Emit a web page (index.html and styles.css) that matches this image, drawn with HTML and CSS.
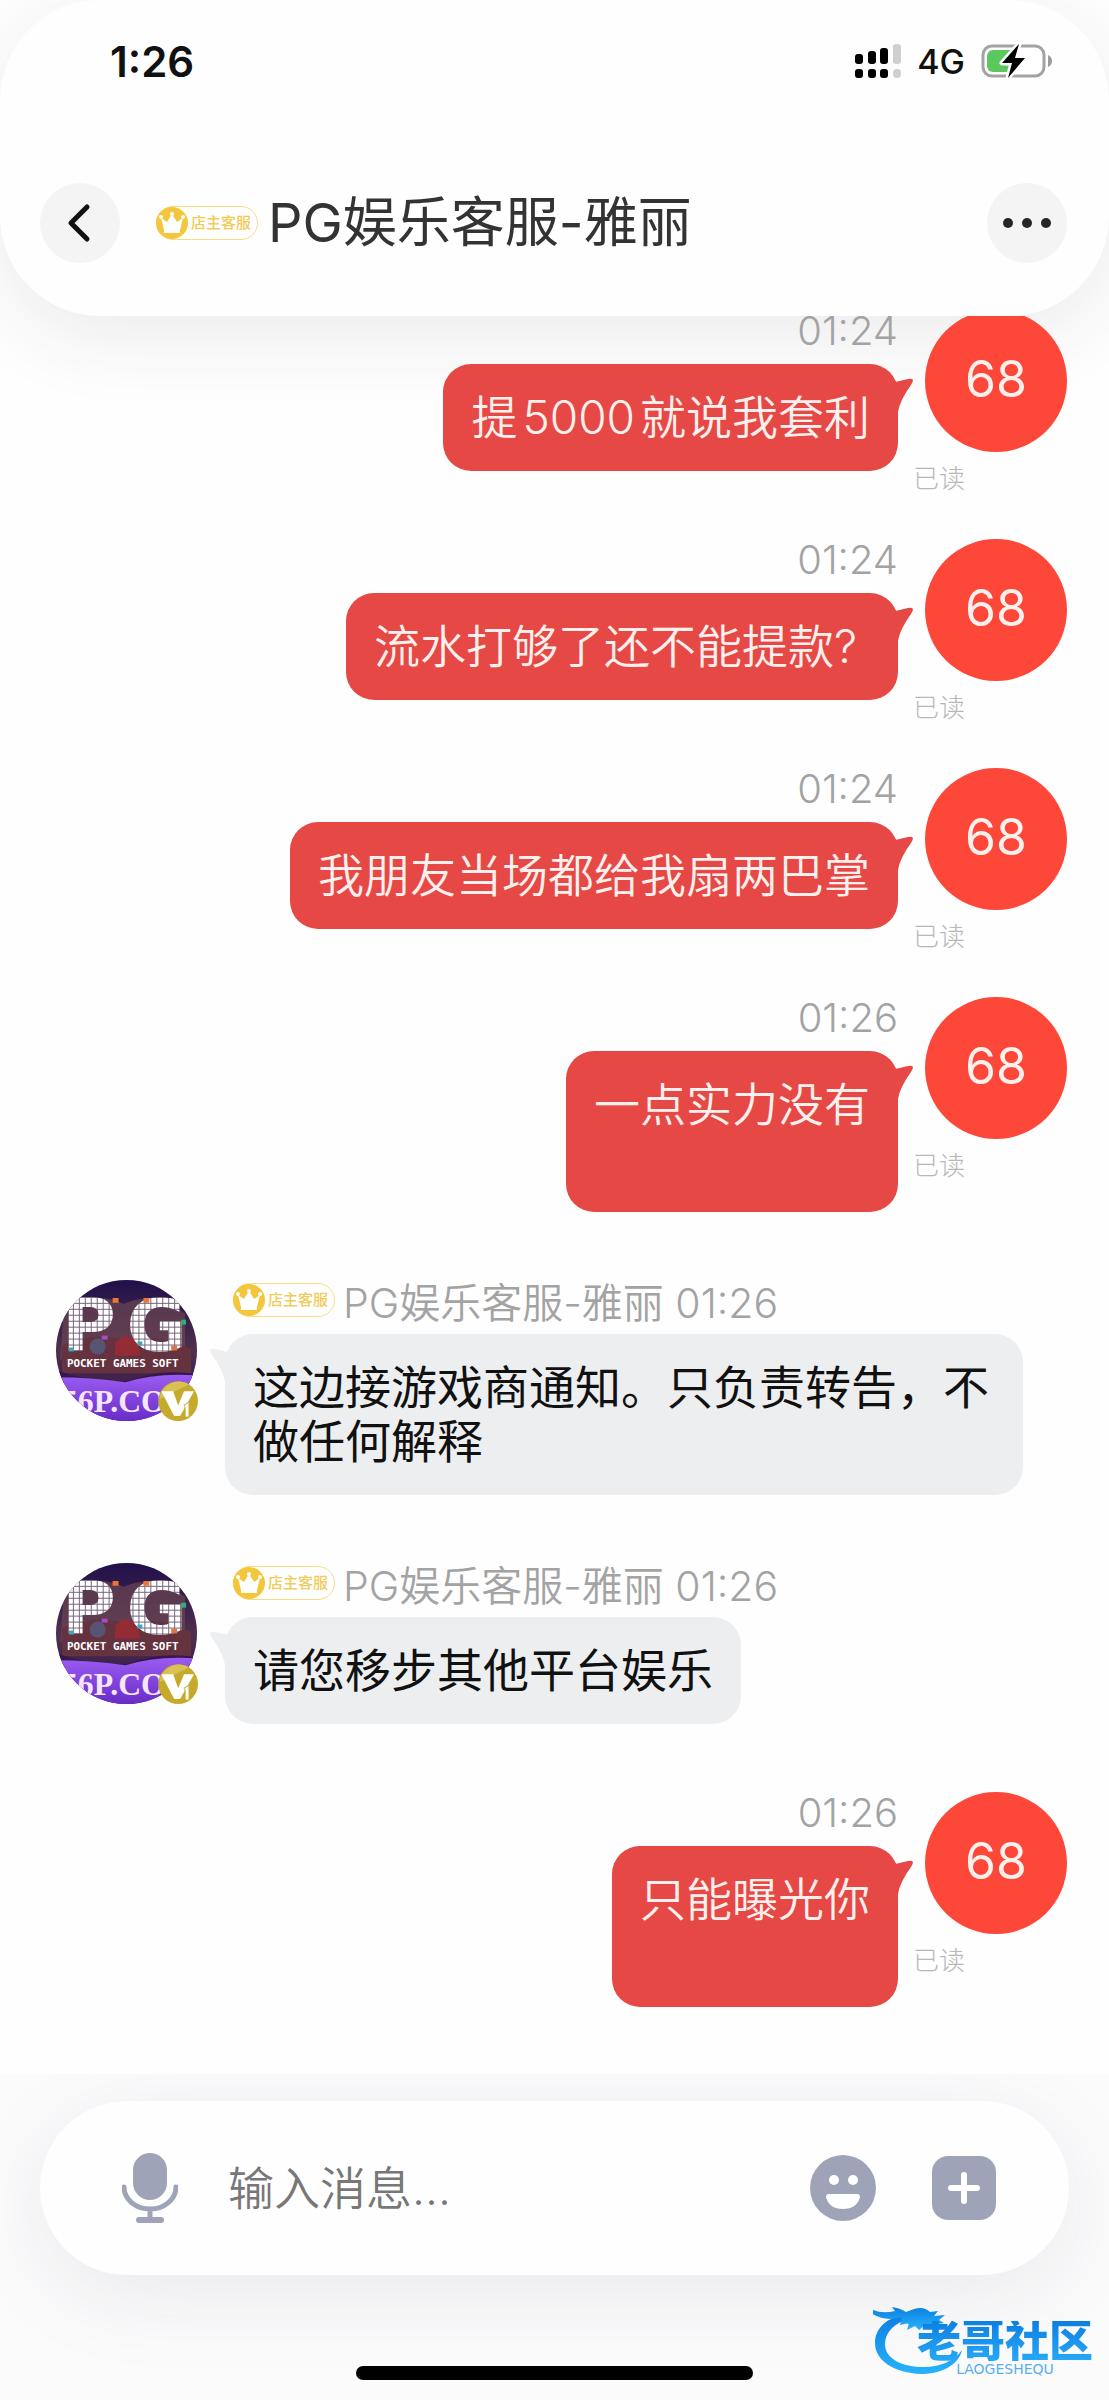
FILE: index.html
```html
<!DOCTYPE html>
<html lang="zh-CN">
<head>
    <meta charset="UTF-8" />
    <meta name="viewport" content="width=device-width, initial-scale=1.0" />
    <title>PG娱乐客服-雅丽</title>
    <link rel="stylesheet" href="styles.css">
</head>
<body>
    <!-- shared symbols -->
    <svg class="defs" width="0" height="0" aria-hidden="true">
        <defs>
            <linearGradient id="sky" x1="0" y1="0" x2="0" y2="1">
                <stop offset="0" stop-color="#20104a" />
                <stop offset="0.5" stop-color="#4f2f4c" />
                <stop offset="1" stop-color="#2a1050" />
            </linearGradient>
            <linearGradient id="band" x1="0" y1="0" x2="0" y2="1">
                <stop offset="0" stop-color="#9a5cf0" />
                <stop offset="1" stop-color="#6a2cc8" />
            </linearGradient>
            <pattern id="pixels" width="6" height="6" patternUnits="userSpaceOnUse">
                <rect width="6" height="6" fill="#75657c" />
                <rect width="5" height="5" fill="#fff" />
            </pattern>
            <clipPath id="round"><circle cx="71" cy="71" r="71" /></clipPath>
        </defs>
        <symbol id="crown" viewBox="0 0 34 34">
            <circle cx="17" cy="17" r="16" fill="#f3c63c" />
            <path d="M6 12l6 4 5-8 5 8 6-4-3 12H9z" fill="#fff" />
            <circle cx="6" cy="11" r="2" fill="#fff" />
            <circle cx="17" cy="8" r="2" fill="#fff" />
            <circle cx="28" cy="11" r="2" fill="#fff" />
            <path d="M9 24h16v3H9z" fill="#fff" />
        </symbol>
        <symbol id="scene" viewBox="0 0 144 144">
            <g clip-path="url(#round)">
                <rect width="142" height="142" fill="url(#sky)" />
                <path d="M8 30q30-20 60-6 30-14 62 10v46H4z" fill="#6b4652" opacity="0.7" />
                <path d="M6 66q34-16 66-4 32-10 64 8v24H6z" fill="#64333f" />
                <circle cx="42" cy="67" r="8" fill="#575476" />
                <path d="M60 62l10-6 12 6 3 14H59z" fill="#942c36" />
                <path d="M0 91q40 14 76 10 28-12 66-6v10H0z" fill="#35164f" />
                <path d="M0 98q34 0 70 5 30-10 72-7v46H0z" fill="url(#band)" />
            </g>
        </symbol>
        <symbol id="level" viewBox="0 0 144 144">
            <path d="M57 18h6v5h-6zM88 18h6v5h-6z" fill="#e87634" />
            <path d="M126 40h5v5h-5z" fill="#2fae72" />
            <path d="M46 56h6v4h-6z" fill="#a44cc4" />
            <path d="M13 68h5v4h-5zM82 62h5v4h-5z" fill="#3da7bd" />
            <path d="M116 66h6v5h-6z" fill="#df7546" />
            <circle cx="123" cy="122" r="20" fill="#c5aa2b" />
            <path d="M104 120a20 20 0 0 1 30-15z" fill="#d9c253" />
            <path d="M106 112h12l5 14 6-14h10l-14 25h-6z" fill="#fff" />
            <path d="M129 126l5-3v15h-4v-10z" fill="#fff" stroke="#c5aa2b" stroke-width="1" />
        </symbol>
    </svg>

    <header class="header">
        <div class="status-bar">
            <span class="clock">1:26</span>
            <div class="status-icons">
                <svg width="46" height="34" viewBox="0 0 46 34" aria-label="信号">
                    <g fill="#000">
                        <rect x="0" y="10" width="8" height="10" rx="3" />
                        <rect x="13" y="7" width="8" height="13" rx="3" />
                        <rect x="25" y="4" width="8" height="16" rx="3" />
                        <rect x="0" y="25" width="8" height="9" rx="3" />
                        <rect x="13" y="25" width="8" height="9" rx="3" />
                        <rect x="25" y="25" width="8" height="9" rx="3" />
                    </g>
                    <g fill="#cfcfcf">
                        <rect x="38" y="0" width="8" height="20" rx="3" />
                        <rect x="38" y="25" width="8" height="9" rx="4" />
                    </g>
                </svg>
                <span class="network">4G</span>
                <svg width="72" height="36" viewBox="0 0 72 36" aria-label="电池">
                    <rect x="2" y="3" width="61" height="30" rx="9" fill="#fff" stroke="#a3a3a3" stroke-width="3" />
                    <path d="M12 7h20v22H12a6 6 0 0 1-6-6V13a6 6 0 0 1 6-6z" fill="#5ac85c" />
                    <path d="M67 12q4 2 4 6t-4 6z" fill="#9b9b9b" />
                    <path d="M38 1L21 20h10l-4 15 17-20H34z" fill="#000" stroke="#fff" stroke-width="5" stroke-linejoin="round" paint-order="stroke" />
                </svg>
            </div>
        </div>
        <div class="nav">
            <button class="round-btn" type="button" aria-label="返回">
                <svg width="40" height="44" viewBox="0 0 40 44"><path d="M27 6L11 22l16 16" fill="none" stroke="#111" stroke-width="5" stroke-linecap="round" stroke-linejoin="round" /></svg>
            </button>
            <span class="badge"><svg class="crown"><use href="#crown" /></svg>店主客服</span>
            <h1>PG娱乐客服-雅丽</h1>
            <button class="round-btn more" type="button" aria-label="更多">
                <svg width="52" height="12" viewBox="0 0 52 12" fill="#262626"><circle cx="7" cy="6" r="5" /><circle cx="26" cy="6" r="5" /><circle cx="45" cy="6" r="5" /></svg>
            </button>
        </div>
    </header>

    <main class="chat">
        <div class="messages">
            <div class="message mine">
                <div class="content">
                    <div class="meta">01:24</div>
                    <p class="bubble">提<span class="num">5000</span>就说我套利</p>
                </div>
                <div class="side">
                    <div class="avatar">68</div>
                    <span class="read">已读</span>
                </div>
            </div>
            <div class="message mine">
                <div class="content">
                    <div class="meta">01:24</div>
                    <p class="bubble">流水打够了还不能提款?&nbsp;</p>
                </div>
                <div class="side">
                    <div class="avatar">68</div>
                    <span class="read">已读</span>
                </div>
            </div>
            <div class="message mine">
                <div class="content">
                    <div class="meta">01:24</div>
                    <p class="bubble">我朋友当场都给我扇两巴掌</p>
                </div>
                <div class="side">
                    <div class="avatar">68</div>
                    <span class="read">已读</span>
                </div>
            </div>
            <div class="message mine">
                <div class="content">
                    <div class="meta">01:26</div>
                    <p class="bubble">一点实力没有<br>&nbsp;</p>
                </div>
                <div class="side">
                    <div class="avatar">68</div>
                    <span class="read">已读</span>
                </div>
            </div>
            <div class="message theirs">
                <svg class="photo" viewBox="0 0 144 144" role="img" aria-label="PG">
                    <use href="#scene" />
                    <g clip-path="url(#round)">
                        <text class="pg-letter" x="6" y="72">P</text>
                        <text class="pg-letter" x="71" y="72">G</text>
                        <text class="pg-soft" x="11" y="88">POCKET GAMES SOFT</text>
                        <text class="pg-domain" x="6" y="133">56P.CO</text>
                    </g>
                    <use href="#level" />
                </svg>
                <div class="content">
                    <div class="meta"><span class="badge"><svg class="crown"><use href="#crown" /></svg>店主客服</span>PG娱乐客服-雅丽 01:26</div>
                    <p class="bubble">这边接游戏商通知。只负责转告，不做任何解释</p>
                </div>
            </div>
            <div class="message theirs">
                <svg class="photo" viewBox="0 0 144 144" role="img" aria-label="PG">
                    <use href="#scene" />
                    <g clip-path="url(#round)">
                        <text class="pg-letter" x="6" y="72">P</text>
                        <text class="pg-letter" x="71" y="72">G</text>
                        <text class="pg-soft" x="11" y="88">POCKET GAMES SOFT</text>
                        <text class="pg-domain" x="6" y="133">56P.CO</text>
                    </g>
                    <use href="#level" />
                </svg>
                <div class="content">
                    <div class="meta"><span class="badge"><svg class="crown"><use href="#crown" /></svg>店主客服</span>PG娱乐客服-雅丽 01:26</div>
                    <p class="bubble">请您移步其他平台娱乐</p>
                </div>
            </div>
            <div class="message mine">
                <div class="content">
                    <div class="meta">01:26</div>
                    <p class="bubble">只能曝光你<br>&nbsp;</p>
                </div>
                <div class="side">
                    <div class="avatar">68</div>
                    <span class="read">已读</span>
                </div>
            </div>
        </div>
    </main>

    <footer class="footer">
        <form class="composer">
            <button class="icon-btn" type="button" aria-label="语音">
                <svg width="56" height="70" viewBox="0 0 56 70">
                    <rect x="11" y="0" width="34" height="47" rx="17" fill="#9fa3b8" />
                    <path d="M2 34a26 22 0 0 0 52 0M28 56v10" fill="none" stroke="#9fa3b8" stroke-width="5" stroke-linecap="round" />
                    <rect x="14" y="64" width="28" height="6" rx="3" fill="#9fa3b8" />
                </svg>
            </button>
            <input class="text" type="text" placeholder="输入消息..." aria-label="输入消息">
            <button class="icon-btn" type="button" aria-label="表情">
                <svg width="66" height="66" viewBox="0 0 66 66">
                    <circle cx="33" cy="33" r="33" fill="#9fa3b8" />
                    <circle cx="24" cy="25" r="5" fill="#fff" />
                    <circle cx="43" cy="25" r="5" fill="#fff" />
                    <path d="M19 39h28q3 0 3 3-3 12-17 12T16 42q0-3 3-3z" fill="#fff" />
                </svg>
            </button>
            <button class="icon-btn plus" type="button" aria-label="添加">
                <svg width="64" height="64" viewBox="0 0 64 64">
                    <rect width="64" height="64" rx="16" fill="#9fa3b8" />
                    <path d="M32 19v26M19 32h26" stroke="#fff" stroke-width="6" stroke-linecap="round" />
                </svg>
            </button>
        </form>
        <div class="home-indicator"></div>
        <div class="site-mark">
            <svg class="dragon" width="92" height="72" viewBox="0 0 92 72" aria-hidden="true">
                <defs>
                    <linearGradient id="wave" x1="0" y1="0" x2="0" y2="1">
                        <stop offset="0" stop-color="#0d7fe0" />
                        <stop offset="1" stop-color="#27b3fb" />
                    </linearGradient>
                </defs>
                <g fill="url(#wave)">
                    <path d="M30 10C10 14 2 26 2 38c0 18 20 30 46 31 22 0 38-10 41-24-8 11-22 17-38 17-22 0-39-8-39-23 0-9 6-18 18-23l8 4 6-8z" />
                    <path d="M0 5q10 4 22 1l-3-4q8 1 14 5l8-3q10-3 16 3l8-1-4 5 11-1-6 5 5 3-12 2 6 4-14-3-5 4-4-4-8 4 2-7-9 2 2-8q-20 6-35-7z" />
                </g>
            </svg>
            <div class="site-name">
                <strong>老哥社区</strong>
                <small>LAOGESHEQU</small>
            </div>
        </div>
    </footer>
</body>
</html>
```
FILE: styles.css
```css
* { margin: 0; padding: 0; box-sizing: border-box; }
body {
    display: flex;
    flex-direction: column;
    min-height: 100vh;
    background: #fefefe;
    color: #111;
    font-family: "Inter", "Noto Sans CJK SC", sans-serif;
    overflow-x: hidden;
}
button {
    border: none;
    background: none;
    cursor: pointer;
}
.defs { position: absolute; }

/* header */
.header {
    padding-bottom: 53px;
    border-radius: 100px;
    background: #fefefe;
    box-shadow: 0 20px 80px rgba(40, 40, 70, 0.09);
}
.status-bar {
    display: flex;
    align-items: center;
    justify-content: space-between;
    height: 122px;
    padding: 0 56px 0 110px;
}
.clock {
    font-size: 42px;
    font-weight: 600;
}
.status-icons {
    display: flex;
    align-items: center;
    gap: 16px;
}
.network {
    font-size: 34px;
    font-weight: 500;
}
.nav {
    display: flex;
    align-items: center;
    height: 80px;
    margin-top: 61px;
    padding: 0 42px 0 40px;
}
.nav h1 {
    margin-left: 10px;
    font-size: 54px;
    font-weight: 400;
    line-height: 80px;
    color: #333;
}
.nav .badge { margin-left: 36px; }
.round-btn {
    display: flex;
    align-items: center;
    justify-content: center;
    flex: none;
    width: 80px;
    height: 80px;
    border-radius: 50%;
    background: #f4f4f4;
}
.more { margin-left: auto; }
.badge {
    display: flex;
    align-items: center;
    flex: none;
    height: 34px;
    padding-right: 6px;
    border: 1px solid #f7dc86;
    border-radius: 17px;
    background: #fff;
    color: #f0cb58;
    font-size: 15px;
    font-weight: 500;
    line-height: 32px;
}
.crown {
    width: 34px;
    height: 34px;
    margin: 0 2px 0 -2px;
}

/* messages */
.chat {
    flex: 1;
    overflow: hidden;
}
.messages {
    display: flex;
    flex-direction: column;
    gap: 68px;
    margin-top: -6px;
    padding: 0 42px 67px 56px;
}
.message { display: flex; }
.mine {
    justify-content: flex-end;
    gap: 15px;
}
.theirs { gap: 26px; }
.content {
    display: flex;
    flex-direction: column;
    align-items: flex-start;
}
.mine .content { align-items: flex-end; }
.meta {
    display: flex;
    align-items: center;
    height: 54px;
    padding: 0 0 14px 8px;
    font-size: 40px;
    font-weight: 350;
    color: #a3a3a3;
}
.theirs .meta { font-size: 41px; }
.meta .badge {
    margin-right: 8px;
    font-weight: 500;
}
.bubble {
    position: relative;
    max-width: 798px;
    padding: 26px 28px 27px;
    border-radius: 28px;
    font-size: 46px;
    line-height: 54px;
    background: #edeef0;
}
.mine .bubble {
    background: #e64945;
    color: #fff0ee;
    font-weight: 350;
}
.num { margin: 0 5px; }
.bubble::before {
    content: "";
    position: absolute;
    top: 14px;
    left: -15px;
    width: 30px;
    height: 36px;
    background: inherit;
    clip-path: path("M0 2Q1 0 5 1L22 5V30L15 34Q13 22 2 7Q0 4 0 2Z");
}
.mine .bubble::before {
    left: auto;
    right: -15px;
    clip-path: path("M30 2Q29 0 25 1L8 5V30L15 34Q17 22 28 7Q30 4 30 2Z");
}
.side {
    display: flex;
    flex-direction: column;
    flex: none;
    width: 154px;
}
.avatar {
    width: 142px;
    height: 142px;
    margin-left: auto;
    border-radius: 50%;
    background: #fd4739;
    color: #fff0ee;
    font-size: 50px;
    line-height: 138px;
    text-align: center;
}
.read {
    margin: 14px 0 -30px;
    font-size: 26px;
    font-weight: 300;
    line-height: 26px;
    color: #b8b8b8;
}
.photo {
    flex: none;
    width: 143px;
    height: 143px;
}
.pg-letter {
    font-family: "DejaVu Sans", sans-serif;
    font-size: 74px;
    font-weight: 700;
    fill: url(#pixels);
}
.pg-soft {
    font-family: "DejaVu Sans Mono", monospace;
    font-size: 11px;
    font-weight: 700;
    fill: #fff;
}
.pg-domain {
    font-family: "Liberation Serif", serif;
    font-size: 32px;
    font-weight: 700;
    fill: #f4e6ff;
}

/* footer */
.footer {
    position: relative;
    display: flex;
    flex-direction: column;
    align-items: center;
    padding: 27px 40px 21px;
    background: #fbfbfc;
    overflow: hidden;
}
.composer {
    display: flex;
    align-items: center;
    width: 100%;
    height: 174px;
    padding: 0 73px 0 82px;
    border-radius: 87px;
    background: #fefefe;
    box-shadow: 0 20px 90px rgba(40, 40, 70, 0.08);
}
.icon-btn {
    display: flex;
    flex: none;
}
.plus { margin-left: 56px; }
.text {
    flex: 1;
    min-width: 0;
    margin-left: 50px;
    border: none;
    outline: none;
    background: none;
    color: #333;
    font-family: inherit;
    font-size: 46px;
    font-weight: 350;
}
.text::placeholder { color: #777; }
.home-indicator {
    width: 397px;
    height: 14px;
    margin-top: 91px;
    border-radius: 7px;
    background: #000;
}
.site-mark {
    position: absolute;
    right: 16px;
    bottom: 24px;
    display: flex;
    align-items: flex-end;
}
.site-name {
    display: flex;
    flex-direction: column;
    align-items: center;
    margin-left: -48px;
}
.site-name strong {
    font-size: 44px;
    font-weight: 900;
    line-height: 40px;
    background: linear-gradient(#0d7fe0, #27a8f8);
    -webkit-background-clip: text;
    background-clip: text;
    color: transparent;
}
.site-name small {
    font-family: "DejaVu Sans", sans-serif;
    font-size: 14px;
    line-height: 16px;
    color: #5aaef0;
}
```
